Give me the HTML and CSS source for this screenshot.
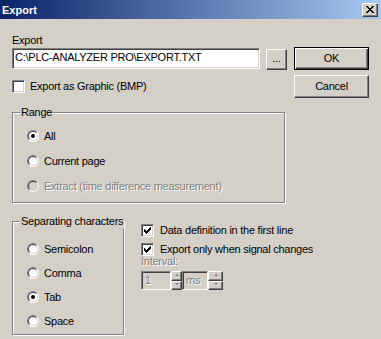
FILE: index.html
```html
<!DOCTYPE html>
<html>
<head>
    <title>Export</title>
    <link rel="stylesheet" href="styles.css">
</head>
<body>
    <div class="window">
        <div class="titlebar">
            <span class="title">Export</span>
            <span class="close">
                <svg width="8" height="7" viewBox="0 0 8 7" shape-rendering="crispEdges">
                    <path d="M0 0h2v1h-2zM6 0h2v1h-2zM1 1h2v1h-2zM5 1h2v1h-2zM2 2h4v1h-4zM3 3h2v1h-2zM2 4h4v1h-4zM1 5h2v1h-2zM5 5h2v1h-2zM0 6h2v1h-2zM6 6h2v1h-2z" fill="#000"/>
                </svg>
            </span>
        </div>

        <div class="dialog">
            <div class="main">
                <div class="left">
                    <div class="label">Export</div>
                    <div class="file-row">
                        <div class="edit file">C:\PLC-ANALYZER PRO\EXPORT.TXT</div>
                        <div class="btn browse">...</div>
                    </div>
                    <div class="check-row graphic">
                        <span class="check"></span>
                        <span>Export as Graphic (BMP)</span>
                    </div>

                    <div class="group range">
                        <span class="group-title">Range</span>
                        <div class="radio-row"><span class="radio on"></span>All</div>
                        <div class="radio-row"><span class="radio"></span>Current page</div>
                        <div class="radio-row disabled"><span class="radio"></span>Extract (time difference measurement)</div>
                    </div>
                </div>

                <div class="buttons">
                    <div class="btn default">OK</div>
                    <div class="btn">Cancel</div>
                </div>
            </div>

            <div class="bottom">
                <div class="group sep">
                    <span class="group-title">Separating characters</span>
                    <div class="radio-row"><span class="radio"></span>Semicolon</div>
                    <div class="radio-row"><span class="radio"></span>Comma</div>
                    <div class="radio-row"><span class="radio on"></span>Tab</div>
                    <div class="radio-row"><span class="radio"></span>Space</div>
                </div>

                <div class="options">
                    <div class="check-row">
                        <span class="check on">
                            <svg width="7" height="7" viewBox="0 0 7 7" shape-rendering="crispEdges"><path d="M6 0h1v1h-1zM5 1h2v1h-2zM0 2h1v1h-1zM4 2h3v1h-3zM0 3h2v1h-2zM3 3h3v1h-3zM0 4h5v1h-5zM1 5h3v1h-3zM2 6h1v1h-1z" fill="#000"/></svg>
                        </span>
                        <span>Data definition in the first line</span>
                    </div>
                    <div class="check-row">
                        <span class="check on">
                            <svg width="7" height="7" viewBox="0 0 7 7" shape-rendering="crispEdges"><path d="M6 0h1v1h-1zM5 1h2v1h-2zM0 2h1v1h-1zM4 2h3v1h-3zM0 3h2v1h-2zM3 3h3v1h-3zM0 4h5v1h-5zM1 5h3v1h-3zM2 6h1v1h-1z" fill="#000"/></svg>
                        </span>
                        <span>Export only when signal changes</span>
                    </div>
                    <div class="interval-label">Interval:</div>
                    <div class="spin-row">
                        <div class="edit off num">1</div>
                        <div class="spin"><span class="arrow up"></span><span class="arrow down"></span></div>
                        <div class="edit off unit">ms</div>
                        <div class="spin wide"><span class="arrow up"></span><span class="arrow down"></span></div>
                    </div>
                </div>
            </div>
        </div>
    </div>
</body>
</html>
```

FILE: styles.css
```css
body {
    margin: 0;
    padding: 0;
    background: #d4d0c8;
    font-family: "Liberation Sans", Arial, sans-serif;
    font-size: 11px;
    line-height: 13px;
    letter-spacing: -0.25px;
    color: #000;
}
.window {
    width: 381px;
    height: 339px;
    overflow: hidden;
}
.titlebar {
    height: 19px;
    display: flex;
    align-items: center;
    justify-content: space-between;
    padding: 0 3px 0 2px;
    background: linear-gradient(to right, #0a246a, #a6caf0);
}
.title {
    color: #fff;
    font-weight: bold;
    letter-spacing: 0;
    padding-top: 2px;
}
.close {
    width: 16px;
    height: 14px;
    box-sizing: border-box;
    display: flex;
    align-items: center;
    justify-content: center;
    background: #d4d0c8;
    border: 1px solid;
    border-color: #fff #404040 #404040 #fff;
    box-shadow: inset -1px -1px #808080;
}
.dialog {
    padding: 15px 0 0 12px;
}
.main {
    display: flex;
}
.left {
    width: 275px;
}
.label {
    height: 13px;
}
.file-row {
    display: flex;
    margin-top: 1px;
}
.edit {
    box-sizing: border-box;
    background: #fff;
    border: 1px solid;
    border-color: #808080 #fff #fff #808080;
    box-shadow: inset 1px 1px #404040, inset -1px -1px #d4d0c8;
    white-space: nowrap;
    overflow: hidden;
}
.file {
    width: 248px;
    height: 21px;
    padding: 2px 0 0 2px;
}
.btn {
    box-sizing: border-box;
    width: 75px;
    height: 23px;
    display: flex;
    align-items: center;
    justify-content: center;
    background: #d4d0c8;
    border: 1px solid;
    border-color: #fff #404040 #404040 #fff;
    box-shadow: inset -1px -1px #808080;
}
.btn.browse {
    width: 21px;
    height: 21px;
    margin: 1px 0 0 6px;
    align-items: flex-end;
    padding-bottom: 4px;
}
.btn.default {
    border: 1px solid #000;
    box-shadow: inset 1px 1px #fff, inset -1px -1px #404040, inset -2px -2px #808080;
}
.buttons {
    margin: 13px 0 0 7px;
    display: flex;
    flex-direction: column;
    gap: 5px;
}
.check-row {
    display: flex;
    align-items: center;
    gap: 5px;
    height: 13px;
    white-space: nowrap;
    overflow: hidden;
}
.graphic {
    margin-top: 10px;
}
.check {
    flex: none;
    width: 13px;
    height: 13px;
    box-sizing: border-box;
    background: #fff;
    border: 1px solid;
    border-color: #808080 #fff #fff #808080;
    box-shadow: inset 1px 1px #404040, inset -1px -1px #d4d0c8;
    display: flex;
    align-items: center;
    justify-content: center;
}
.group {
    position: relative;
    box-sizing: border-box;
    border: 1px solid #808080;
    box-shadow: inset 1px 1px #fff, 1px 1px #fff;
}
.group-title {
    position: absolute;
    top: -7px;
    left: 7px;
    padding: 0 1px;
    white-space: nowrap;
    background: #d4d0c8;
}
.range {
    margin-top: 19px;
    width: 273px;
    height: 91px;
    padding: 17px 0 0 14px;
}
.radio-row {
    display: flex;
    align-items: center;
    gap: 5px;
    height: 12px;
    margin-bottom: 13px;
    white-space: nowrap;
}
.sep .radio-row {
    margin-bottom: 12px;
}
.radio {
    flex: none;
    position: relative;
    width: 12px;
    height: 12px;
    box-sizing: border-box;
    border-radius: 50%;
    background: #fff;
    border: 1px solid;
    border-color: #808080 #fff #fff #808080;
}
.radio::before {
    content: '';
    position: absolute;
    inset: 0;
    border-radius: 50%;
    border: 1px solid;
    border-color: #404040 #d4d0c8 #d4d0c8 #404040;
}
.radio.on::after {
    content: '';
    position: absolute;
    left: 3px;
    top: 3px;
    width: 4px;
    height: 4px;
    border-radius: 50%;
    background: #000;
}
.disabled {
    color: #808080;
    text-shadow: 1px 1px 0 #fff;
}
.disabled .radio {
    background: #d4d0c8;
}
.bottom {
    display: flex;
    margin-top: 18px;
}
.sep {
    width: 112px;
    height: 114px;
    padding: 21px 0 0 14px;
}
.options {
    margin-left: 17px;
    padding-top: 3px;
    width: 172px;
}
.options .check-row {
    margin-bottom: 6px;
    gap: 6px;
}
.interval-label {
    margin-top: -7px;
    height: 13px;
    color: #808080;
    text-shadow: 1px 1px 0 #fff;
}
.spin-row {
    display: flex;
    margin-top: 3px;
    height: 19px;
}
.edit.off {
    background: #d4d0c8;
    color: #808080;
    text-shadow: 1px 1px 0 #fff;
    padding: 2px 0 0 3px;
}
.num {
    width: 30px;
}
.unit {
    width: 26px;
}
.spin {
    width: 11px;
    display: flex;
    flex-direction: column;
}
.spin.wide {
    width: 15px;
}
.arrow {
    flex: 1;
    box-sizing: border-box;
    border: 1px solid;
    border-color: #fff #404040 #404040 #fff;
    box-shadow: inset -1px -1px #808080;
    position: relative;
}
.arrow::after {
    content: '';
    position: absolute;
    left: 50%;
    top: 50%;
    margin: -2px 0 0 -2px;
    border-left: 2px solid transparent;
    border-right: 2px solid transparent;
}
.arrow.up::after {
    border-bottom: 2px solid #808080;
}
.arrow.down::after {
    border-top: 2px solid #808080;
}
```
